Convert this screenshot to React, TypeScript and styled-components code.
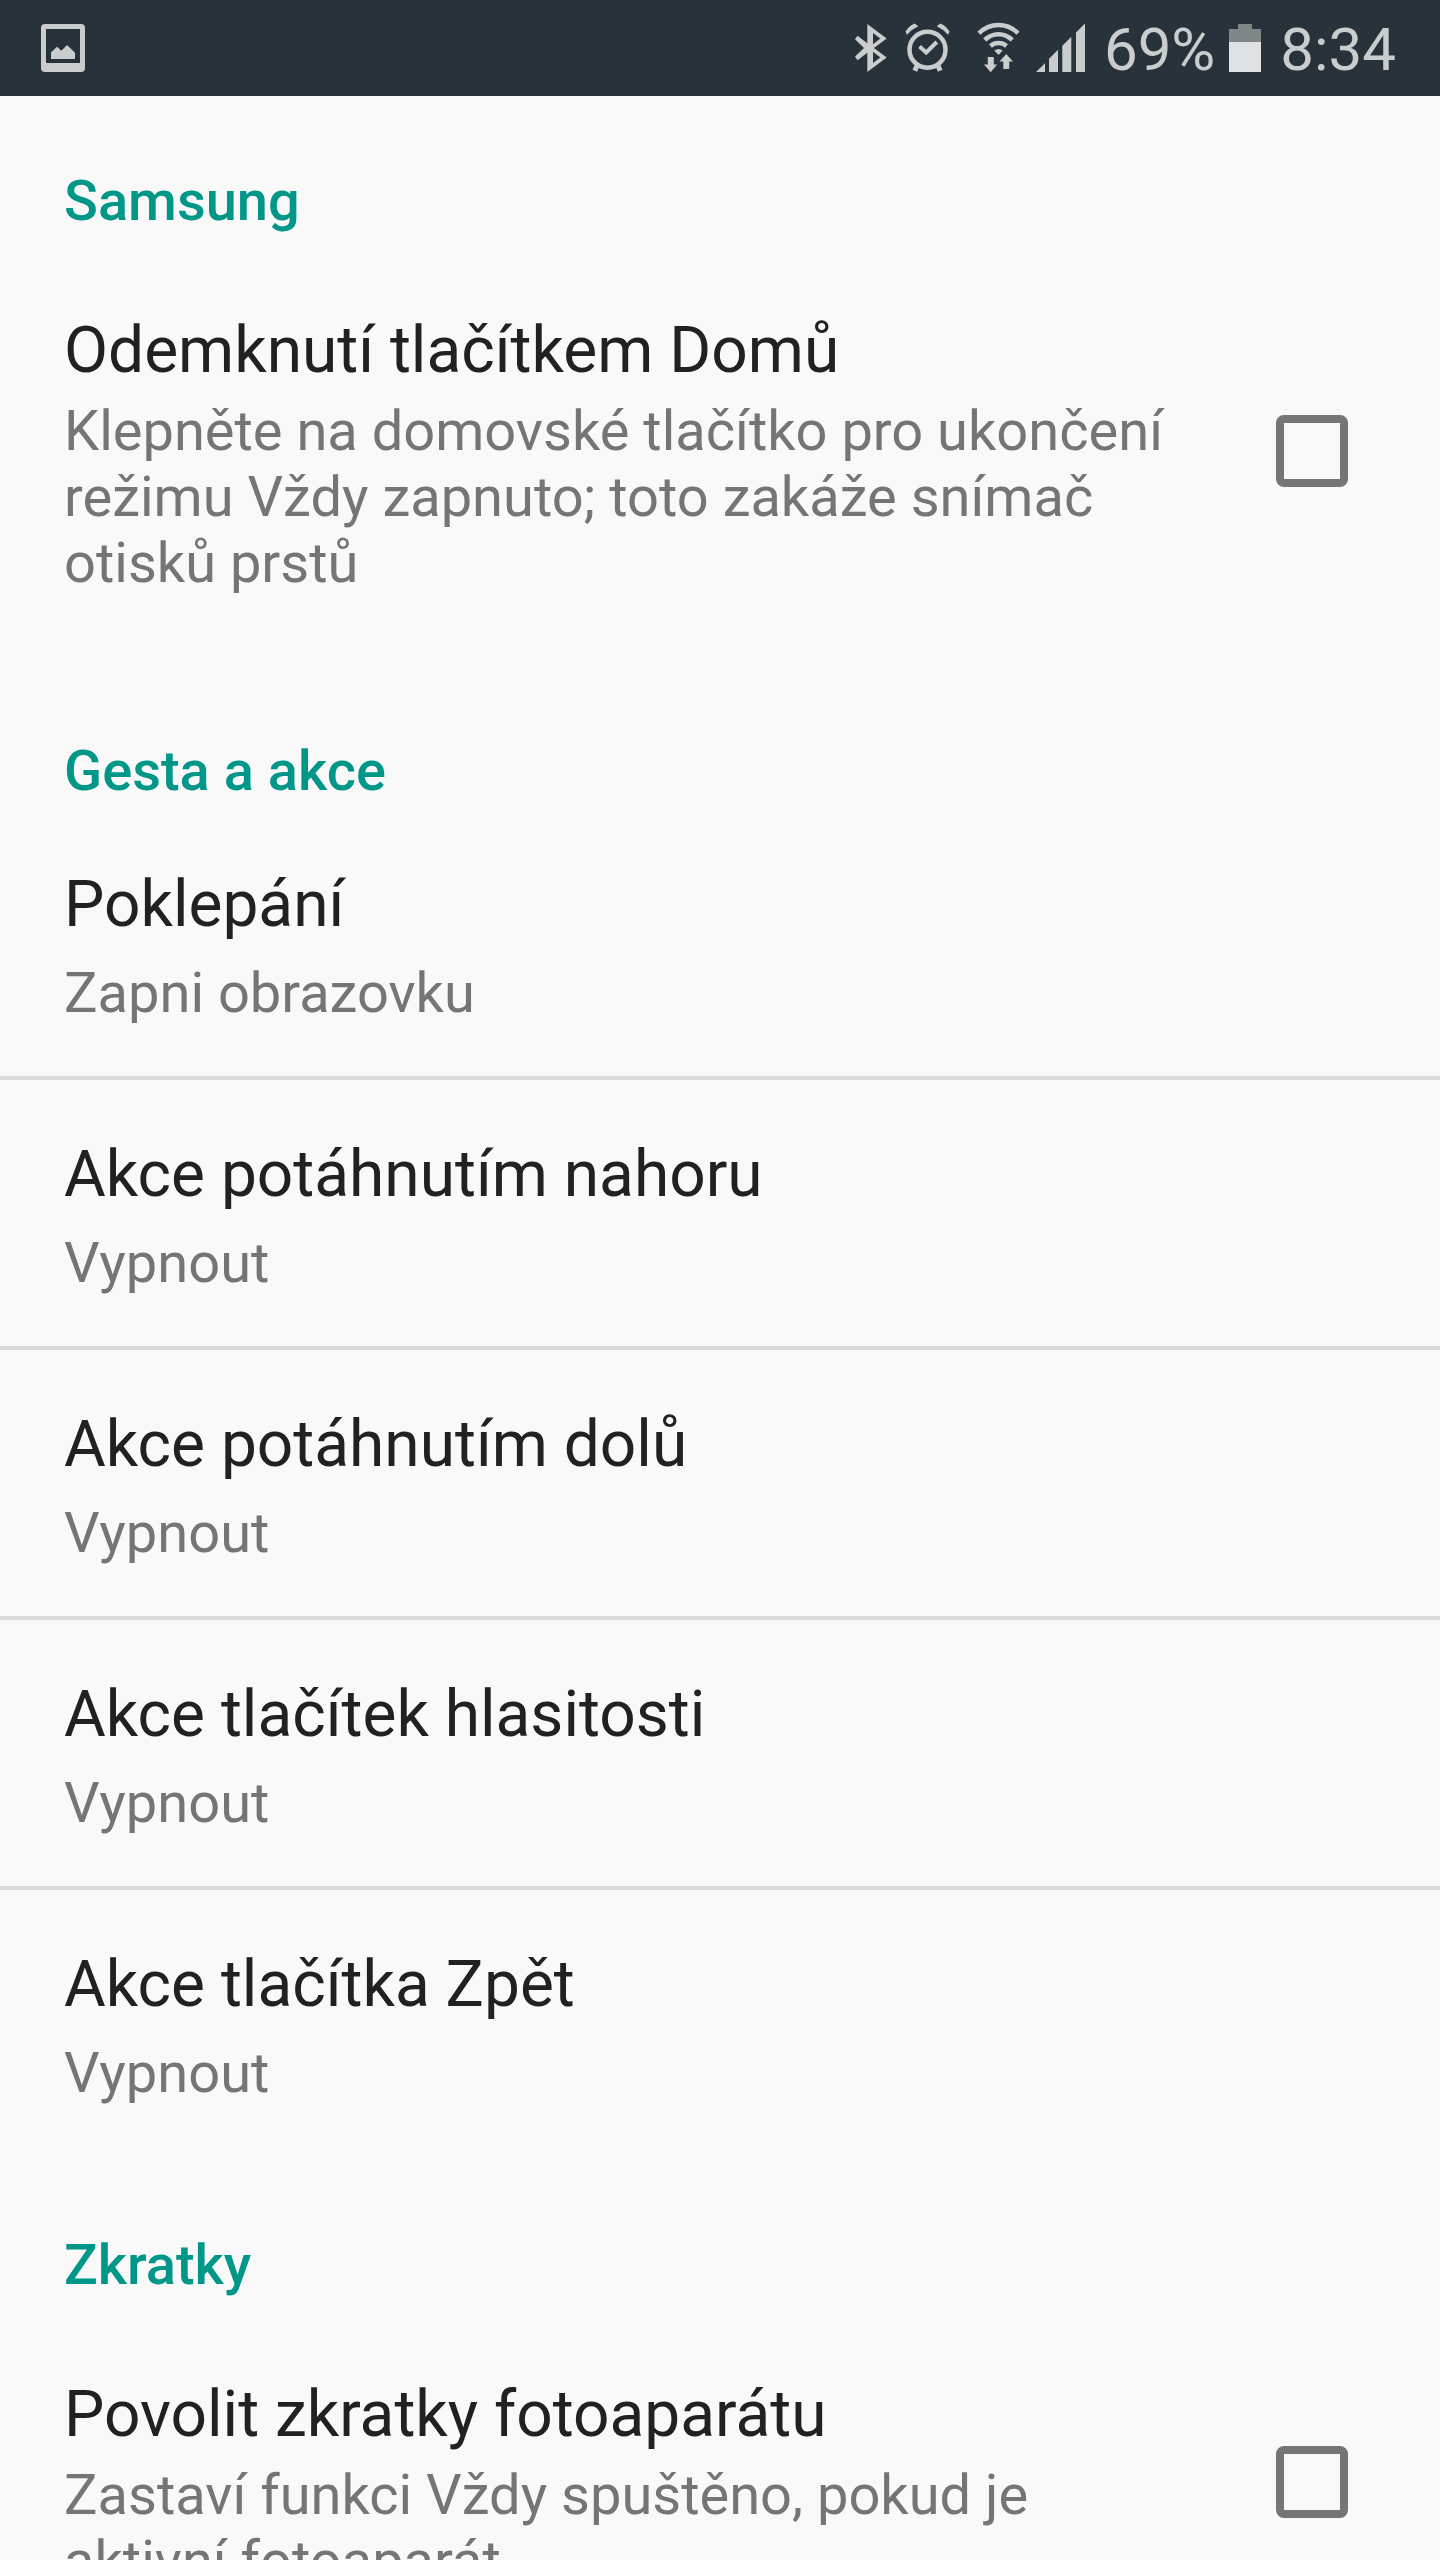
import React, { useId, useState } from "react";
import styled, { createGlobalStyle } from "styled-components";

const GlobalStyle = createGlobalStyle`
  *, *::before, *::after { box-sizing: border-box; }
  body {
    margin: 0;
    background: #f9f9f9;
    font-family: Roboto, "Noto Sans", sans-serif;
  }
`;

const Screen = styled.div`
  display: flex;
  flex-direction: column;
  height: 100vh;
  background: #f9f9f9;
`;

const StatusBar = styled.header`
  flex: none;
  display: flex;
  align-items: center;
  justify-content: space-between;
  height: 96px;
  padding: 0 44px 0 41px;
  background: #28323a;
  color: #c9cdce;
`;

const StatusGroup = styled.div`
  display: flex;
  align-items: center;
  gap: 14px;
`;

const StatusIcon = styled.svg`
  display: block;
  flex: none;
  height: 48px;
  overflow: visible;
  fill: currentColor;
`;

const StatusText = styled.span`
  padding: 4px 0 0 5px;
  font-size: 60px;
  line-height: 70px;
`;

const SettingsList = styled.main`
  flex: 1;
  min-height: 0;
  overflow-y: auto;
  scrollbar-width: none;
`;

const CategoryTitle = styled.h2`
  margin: 0;
  padding: 72px 64px 6px;
  color: #009688;
  font-size: 56px;
  font-weight: 500;
  line-height: 66px;
`;

const ItemTitle = styled.span`
  display: block;
  color: #212121;
  font-size: 64px;
  line-height: 75px;
`;

const ItemSummary = styled.span`
  display: block;
  color: #757575;
  font-size: 56px;
  line-height: 66px;
`;

const ActionRow = styled.button<{ $divider: boolean }>`
  display: flex;
  flex-direction: column;
  gap: 18px;
  width: 100%;
  padding: 57px 64px 50px;
  border: 0;
  border-bottom: 4px solid ${(p) => (p.$divider ? "#dadada" : "transparent")};
  background: none;
  font-family: inherit;
  text-align: left;
`;

const CheckRow = styled.label`
  display: flex;
  align-items: center;
  gap: 80px;
  padding: 0 92px 0 64px;
`;

const CheckText = styled.span`
  flex: 1;
  display: flex;
  flex-direction: column;
  gap: 10px;
  padding: 73px 0 70px;
`;

const CheckBox = styled.input`
  appearance: none;
  flex: none;
  width: 72px;
  height: 72px;
  margin: 0 0 4px;
  border: 8px solid #757575;
  border-radius: 8px;

  &:checked {
    border-color: #009688;
    background: #009688;
  }
`;

const ImageIcon = () => (
  <StatusIcon width="44" viewBox="0 0 44 48" aria-hidden="true">
    <path
      fillRule="evenodd"
      d="M4 0H40Q44 0 44 4V44Q44 48 40 48H4Q0 48 0 44V4Q0 0 4 0ZM5 5V39H39V5Z"
    />
    <path d="M10 35V28.5L16 22.7L20.3 26.8L26 21L34 28.7V35Z" />
  </StatusIcon>
);

const BluetoothIcon = () => (
  <StatusIcon width="38" viewBox="0 0 38 48" aria-hidden="true">
    <path
      fillRule="evenodd"
      d="M16.3 0L35.7 14.5L23 24L35.7 33.5L16.3 48V28.8L6.5 36.3L4 32.6L13 24L4 15.2L6.5 11.8L16.3 19.2ZM22 9V20.3L29.3 14.6ZM22 27.7V39L29.3 33.4Z"
    />
  </StatusIcon>
);

const AlarmIcon = () => (
  <StatusIcon width="60" viewBox="0 0 60 48" aria-hidden="true">
    <g fill="none" stroke="currentColor" strokeWidth="4">
      <circle cx="24.5" cy="25.7" r="18" strokeWidth="4.5" />
      <path d="M16.5 22.5L23.2 28.5L33.8 18" />
      <path strokeWidth="5" d="M14.3 41L11.8 46.8M34.7 41L37.2 46.8" />
    </g>
    <path d="M3 7.5Q6 2 11.5 0L14.7 2.2Q8 5 4.2 10.2ZM46 7.5Q43 2 37.5 0L34.3 2.2Q41 5 44.8 10.2Z" stroke="currentColor" strokeWidth="1" />
  </StatusIcon>
);

const WifiIcon = () => (
  <StatusIcon width="44" viewBox="0 0 44 48" aria-hidden="true">
    <g fill="none" stroke="currentColor" strokeWidth="4.5">
      <path d="M2 9.3A27 27 0 0 1 41 9.3" />
      <path d="M7.8 16A19 19 0 0 1 35.2 16" />
      <path d="M13.5 22A12.5 12.5 0 0 1 29.5 22" />
    </g>
    <path d="M17.3 26.6Q21.5 23.4 25.7 26.6L21.5 31Z" />
    <path d="M10.8 33H16.8V40.6H20.2L13.7 48.3L7 40.6H10.8Z" />
    <path d="M26.3 45V37.6H22.5L29.2 30L36 37.6H32.2V45Z" />
  </StatusIcon>
);

const SignalIcon = () => (
  <StatusIcon width="50" viewBox="0 0 50 48" aria-hidden="true">
    <path d="M1 48L10 39.3V48ZM14 48V34.7L23 25.7V48ZM27.3 48V21.7L36.3 12.7V48ZM41 48V8.5L50 -0.5V48Z" />
  </StatusIcon>
);

const BatteryIcon = () => (
  <StatusIcon width="32" viewBox="0 0 32 48" aria-hidden="true">
    <path fill="#7f8688" d="M9 0H23V5H32V18.5H0V5H9Z" />
    <path fill="#e0e1e3" d="M0 18H32V48H0Z" />
  </StatusIcon>
);

function CheckItem({ title, summary }: { title: string; summary: string }) {
  const id = useId();
  const [checked, setChecked] = useState(false);
  return (
    <CheckRow htmlFor={id}>
      <CheckText>
        <ItemTitle>{title}</ItemTitle>
        <ItemSummary>{summary}</ItemSummary>
      </CheckText>
      <CheckBox
        id={id}
        type="checkbox"
        checked={checked}
        onChange={(e) => setChecked(e.target.checked)}
      />
    </CheckRow>
  );
}

const gestures = [
  { title: "Poklepání", value: "Zapni obrazovku" },
  { title: "Akce potáhnutím nahoru", value: "Vypnout" },
  { title: "Akce potáhnutím dolů", value: "Vypnout" },
  { title: "Akce tlačítek hlasitosti", value: "Vypnout" },
  { title: "Akce tlačítka Zpět", value: "Vypnout" },
];

export default function App() {
  return (
    <>
      <GlobalStyle />
      <Screen>
        <StatusBar>
          <ImageIcon />
          <StatusGroup>
            <BluetoothIcon />
            <AlarmIcon />
            <WifiIcon />
            <SignalIcon />
            <StatusText>69%</StatusText>
            <BatteryIcon />
            <StatusText>8:34</StatusText>
          </StatusGroup>
        </StatusBar>
        <SettingsList>
          <section>
            <CategoryTitle>Samsung</CategoryTitle>
            <CheckItem
              title="Odemknutí tlačítkem Domů"
              summary="Klepněte na domovské tlačítko pro ukončení režimu Vždy zapnuto; toto zakáže snímač otisků prstů"
            />
          </section>
          <section>
            <CategoryTitle>Gesta a akce</CategoryTitle>
            {gestures.map((item, i) => (
              <ActionRow
                key={item.title}
                type="button"
                $divider={i < gestures.length - 1}
              >
                <ItemTitle>{item.title}</ItemTitle>
                <ItemSummary>{item.value}</ItemSummary>
              </ActionRow>
            ))}
          </section>
          <section>
            <CategoryTitle>Zkratky</CategoryTitle>
            <CheckItem
              title="Povolit zkratky fotoaparátu"
              summary="Zastaví funkci Vždy spuštěno, pokud je aktivní fotoaparát"
            />
          </section>
        </SettingsList>
      </Screen>
    </>
  );
}
